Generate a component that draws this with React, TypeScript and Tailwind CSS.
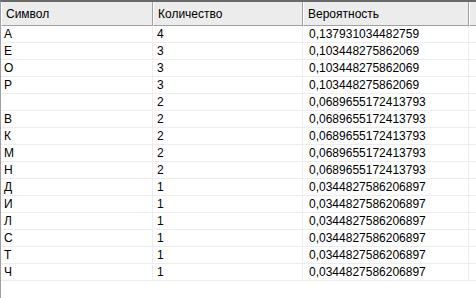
import React from "react";

const rows: [string, string, string][] = [
  ["А", "4", "0,137931034482759"],
  ["Е", "3", "0,103448275862069"],
  ["О", "3", "0,103448275862069"],
  ["Р", "3", "0,103448275862069"],
  ["", "2", "0,0689655172413793"],
  ["В", "2", "0,0689655172413793"],
  ["К", "2", "0,0689655172413793"],
  ["М", "2", "0,0689655172413793"],
  ["Н", "2", "0,0689655172413793"],
  ["Д", "1", "0,0344827586206897"],
  ["И", "1", "0,0344827586206897"],
  ["Л", "1", "0,0344827586206897"],
  ["С", "1", "0,0344827586206897"],
  ["Т", "1", "0,0344827586206897"],
  ["Ч", "1", "0,0344827586206897"],
];

function HeaderCell({ w, label }: { w: string; label: string }) {
  return (
    <div
      className={`${w} h-full flex items-center pl-[4px] border-l border-l-white border-r border-r-[#a0a0a0] border-b border-b-[#a0a0a0]`}
    >
      {label}
    </div>
  );
}

export default function App() {
  return (
    <div
      className="w-[476px] h-[298px] bg-white overflow-hidden border-t-2 border-t-[#696969] border-l border-l-[#a0a0a0] text-[12px] text-black leading-none"
      style={{ fontFamily: '"Liberation Sans", Arial, sans-serif' }}
    >
      <div className="flex h-[24px] bg-[#ececec]">
        <HeaderCell w="w-[152px]" label="Символ" />
        <HeaderCell w="w-[150px]" label="Количество" />
        <HeaderCell w="w-[166px]" label="Вероятность" />
        <div className="flex-1 h-full border-l border-l-white border-b border-b-[#a0a0a0]" />
      </div>
      <div className="flex flex-col">
        {rows.map((r, i) => (
          <div key={i} className="flex h-[17px] border-b border-b-[#ededed]">
            <div className="w-[152px] pl-[3px] flex items-center border-r border-r-[#ededed]">{r[0]}</div>
            <div className="w-[150px] pl-[4px] flex items-center border-r border-r-[#ededed]">{r[1]}</div>
            <div className="w-[166px] pl-[6px] flex items-center border-r border-r-[#ededed]">{r[2]}</div>
            <div className="flex-1" />
          </div>
        ))}
      </div>
    </div>
  );
}
